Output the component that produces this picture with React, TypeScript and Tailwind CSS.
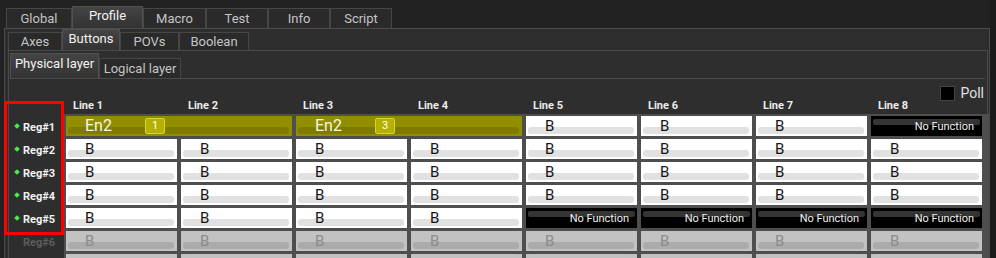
import React from "react";

type Tab = { label: string; w: string; active?: boolean };

const mainTabs: Tab[] = [
	{ label: "Global", w: "w-[66px]" },
	{ label: "Profile", w: "w-[71px]", active: true },
	{ label: "Macro", w: "w-[63px]" },
	{ label: "Test", w: "w-[62px]" },
	{ label: "Info", w: "w-[62px]" },
	{ label: "Script", w: "w-[62px]" },
];

const subTabs: Tab[] = [
	{ label: "Axes", w: "w-[54px]" },
	{ label: "Buttons", w: "w-[58px]", active: true },
	{ label: "POVs", w: "w-[59px]" },
	{ label: "Boolean", w: "w-[70px]" },
];

const layerTabs: Tab[] = [
	{ label: "Physical layer", w: "w-[89px]", active: true },
	{ label: "Logical layer", w: "w-[82px]" },
];

type Cell =
	| { kind: "en2"; badge: string }
	| { kind: "b" }
	| { kind: "off" }
	| { kind: "blank" }
	| { kind: "none" };

const B: Cell = { kind: "b" };
const OFF: Cell = { kind: "off" };
const BLANK: Cell = { kind: "blank" };
const NONE: Cell = { kind: "none" };

const rows: Cell[][] = [
	[{ kind: "en2", badge: "1" }, { kind: "en2", badge: "3" }, B, B, B, NONE],
	[B, B, B, B, B, B, B, B],
	[B, B, B, B, B, B, B, B],
	[B, B, B, B, B, B, B, B],
	[B, B, B, B, NONE, NONE, NONE, NONE],
	[OFF, OFF, OFF, OFF, OFF, OFF, OFF, OFF],
	[BLANK, BLANK, BLANK, BLANK, BLANK, BLANK, BLANK, BLANK],
];

const regs = ["Reg#1", "Reg#2", "Reg#3", "Reg#4", "Reg#5", "Reg#6"];

function TabButton({ tab, activeH, idleH }: { tab: Tab; activeH: string; idleH: string }) {
	return (
		<div
			className={`${tab.w} ${tab.active ? `${activeH} bg-gradient-to-b from-[#444444] to-[#333333] text-[#f2f2f2] border-[#515151]` : `${idleH} bg-[#2a2a2a] text-[#c4c4c4] border-[#464646]`} shrink-0 flex items-center justify-center border-x border-t text-[13px]`}
		>
			{tab.label}
		</div>
	);
}

function GridCell({ cell }: { cell: Cell }) {
	if (cell.kind === "en2") {
		return (
			<div className="col-span-2 relative h-[20px] bg-[#918e00]">
				<div className="absolute left-[2px] right-[3px] top-[11px] h-[7px] rounded-[3px] bg-[#7e7b00]" />
				<div className="relative flex items-center h-[20px] pl-[19px] text-[16px] text-[#f6f6ea]">
					<span className="w-[60px]">En2</span>
					<span className="flex items-center justify-center w-[20px] h-[16px] rounded-[2px] border border-[#d6d33e] bg-[#b4b100] text-[11px] text-white">
						{cell.badge}
					</span>
				</div>
			</div>
		);
	}
	if (cell.kind === "none") {
		return (
			<div className="relative h-[20px] bg-black">
				<div className="absolute left-[2px] right-[2px] top-[3px] h-[6px] rounded-[2px] bg-[#343434]" />
				<div className="relative flex items-center justify-end h-[20px] pt-[2px] pr-[8px] text-[11px] text-[#f0f0f0]">
					No Function
				</div>
			</div>
		);
	}
	const off = cell.kind !== "b";
	return (
		<div className={`relative h-[20px] ${off ? "bg-[#c2c2c2]" : "bg-white"}`}>
			<div className={`absolute left-[2px] right-[3px] top-[11px] h-[7px] rounded-[3px] ${off ? "bg-[#ababab]" : "bg-[#e1e1e1]"}`} />
			{cell.kind !== "blank" && (
				<div className={`relative h-[20px] pl-[19px] text-[15px] leading-[20px] ${off ? "text-[#8c8c8c]" : "text-[#151515]"}`}>B</div>
			)}
		</div>
	);
}

export default function App() {
	return (
		<div className="relative w-[996px] h-[258px] overflow-hidden bg-[#222222] font-[family-name:Roboto,sans-serif]">
			<div className="flex items-start">
				<div className="flex flex-col w-[990px] shrink-0">
					<div className="flex items-end h-[28px] pl-[6px] shrink-0">
						{mainTabs.map((t) => (
							<TabButton key={t.label} tab={t} activeH="h-[22px] pb-[3px]" idleH="h-[20px]" />
						))}
					</div>
					<div className="flex flex-col ml-[4px] border-x border-t border-[#4a4a4a] bg-[#2e2e2e]">
						<div className="flex items-end h-[21px] pl-[3px] shrink-0">
							{subTabs.map((t) => (
								<TabButton key={t.label} tab={t} activeH="h-[21px] pb-[3px]" idleH="h-[18px]" />
							))}
						</div>
						<div className="flex flex-col ml-[3px] mr-[1px] border-x border-t border-[#4a4a4a]">
							<div className="flex items-end h-[27px] pl-[1px] shrink-0">
								{layerTabs.map((t) => (
									<TabButton key={t.label} tab={t} activeH="h-[25px] pb-[4px]" idleH="h-[20px]" />
								))}
							</div>
							<div className="flex ml-[1px] mr-[2px] border-t border-[#4a4a4a]">
								<div className="flex flex-col w-[54px] shrink-0 pt-[39px] gap-[3px]">
									{regs.map((r, i) => (
										<div key={r} className="flex items-center h-[20px] shrink-0">
											<div className="flex justify-center w-[12px] pl-[2px] -mt-[4px]">
												{i < 5 && <div className="w-[4px] h-[4px] rotate-45 bg-[#46f046]" />}
											</div>
											<span className={`ml-[1px] text-[11px] font-bold ${i < 5 ? "text-[#f2f2f2]" : "text-[#5c5c5c]"}`}>{r}</span>
										</div>
									))}
								</div>
								<div className="flex flex-col flex-1">
									<div className="flex justify-end items-center h-[15px] mt-[7px] pr-[5px] gap-[5px] shrink-0">
										<div className="w-[15px] h-[15px] bg-black border border-[#444]" />
										<span className="text-[14px] text-[#e2e2e2]">Poll</span>
									</div>
									<div className="grid grid-cols-[repeat(8,111px)] gap-x-[4px] h-[16px] -mt-[3px] pl-[9px] shrink-0">
										{Array.from({ length: 8 }, (_, i) => (
											<span key={i} className="text-[11px] font-bold text-[#ececec]">Line {i + 1}</span>
										))}
									</div>
									<div className="grid grid-cols-[repeat(8,111px)] gap-x-[4px] gap-y-[3px] pl-[2px] pr-[3px] pt-[2px] pb-[3px] bg-[#4e4e4e]">
										{rows.map((row, ri) =>
											row.map((c, ci) => <GridCell key={`${ri}-${ci}`} cell={c} />),
										)}
									</div>
								</div>
							</div>
						</div>
					</div>
				</div>
				<div className="flex-1 h-[258px] bg-[#1b1b1b]" />
			</div>
			<div className="absolute left-[4px] top-[101px] w-[60px] h-[134px] border-[3px] border-[#ff0000]" />
		</div>
	);
}
